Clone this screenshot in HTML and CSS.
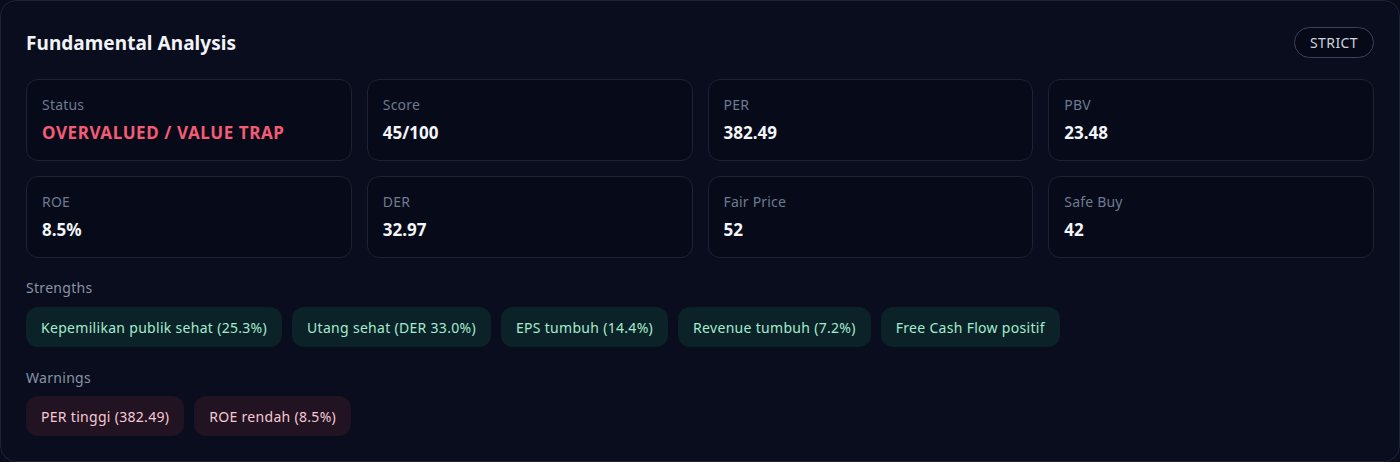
FILE: index.html
```html
<!DOCTYPE html>
<html>
<head>
<meta charset="utf-8">
<link rel="stylesheet" href="styles.css">
</head>
<body>
<section class="card">
  <header class="card-head">
    <h2 class="title">Fundamental Analysis</h2>
    <span class="badge">STRICT</span>
  </header>
  <div class="stats">
    <div class="stat"><div class="stat-label">Status</div><div class="stat-value danger">OVERVALUED / VALUE TRAP</div></div>
    <div class="stat"><div class="stat-label">Score</div><div class="stat-value">45/100</div></div>
    <div class="stat"><div class="stat-label">PER</div><div class="stat-value">382.49</div></div>
    <div class="stat"><div class="stat-label">PBV</div><div class="stat-value">23.48</div></div>
    <div class="stat"><div class="stat-label">ROE</div><div class="stat-value">8.5%</div></div>
    <div class="stat"><div class="stat-label">DER</div><div class="stat-value">32.97</div></div>
    <div class="stat"><div class="stat-label">Fair Price</div><div class="stat-value">52</div></div>
    <div class="stat"><div class="stat-label">Safe Buy</div><div class="stat-value">42</div></div>
  </div>
  <div class="group strengths">
    <div class="group-label">Strengths</div>
    <div class="chips">
      <span class="chip good">Kepemilikan publik sehat (25.3%)</span>
      <span class="chip good">Utang sehat (DER 33.0%)</span>
      <span class="chip good">EPS tumbuh (14.4%)</span>
      <span class="chip good">Revenue tumbuh (7.2%)</span>
      <span class="chip good">Free Cash Flow positif</span>
    </div>
  </div>
  <div class="group warnings">
    <div class="group-label">Warnings</div>
    <div class="chips">
      <span class="chip bad">PER tinggi (382.49)</span>
      <span class="chip bad">ROE rendah (8.5%)</span>
    </div>
  </div>
</section>
</body>
</html>
```
FILE: styles.css
```css
* { box-sizing: border-box; }
html, body { margin: 0; padding: 0; }
body {
  background: #080c1b;
  font-family: "Noto Sans", "Open Sans", sans-serif;
  color: #e6e9f0;
  width: 1400px;
  height: 462px;
}
.card {
  width: 1400px;
  height: 462px;
  border: 1px solid #1d2437;
  border-radius: 16px;
  background: #090d1d;
  padding: 25px;
  display: flex;
  flex-direction: column;
}
.card-head {
  display: flex;
  justify-content: space-between;
  align-items: center;
  height: 34px;
  margin-bottom: 20px;
}
.title {
  margin: 0;
  font-size: 19px;
  font-weight: 700;
  color: #f1f3f7;
  letter-spacing: 0.05px;
}
.badge {
  height: 31px;
  padding: 0 15px;
  border: 1px solid #3a4255;
  border-radius: 16px;
  display: flex;
  align-items: center;
  font-size: 14px;
  letter-spacing: 0.4px;
  color: #cfd4de;
  background: #060a18;
}
.stats {
  display: grid;
  grid-template-columns: repeat(4, 1fr);
  gap: 15px;
}
.stat {
  height: 82px;
  border: 1px solid #1c2335;
  border-radius: 12px;
  background: #060a19;
  padding: 16px 15px 0;
}
.stat-label {
  font-size: 14px;
  line-height: 18px;
  letter-spacing: 0.2px;
  color: #6f7a8f;
}
.stat-value {
  margin-top: 8px;
  font-size: 17px;
  line-height: 22px;
  font-weight: 700;
  color: #f3f5f9;
}
.stat-value.danger { color: #f45b74; letter-spacing: 0.6px; }
.strengths { margin-top: 21px; }
.warnings { margin-top: 22px; }
.group-label {
  font-size: 14px;
  line-height: 18px;
  letter-spacing: 0.3px;
  color: #8a93a6;
  margin-bottom: 9px;
}
.chips {
  display: flex;
  flex-wrap: wrap;
  gap: 10px;
}
.chip {
  height: 40px;
  padding: 0 15px;
  border-radius: 12px;
  display: flex;
  align-items: center;
  font-size: 14px;
  letter-spacing: 0.3px;
}
.strengths .group-label { margin-bottom: 10px; }
.chip.good { background: #0b2228; color: #a3ecce; }
.chip.bad { background: #211322; color: #f7c9d2; }
```
